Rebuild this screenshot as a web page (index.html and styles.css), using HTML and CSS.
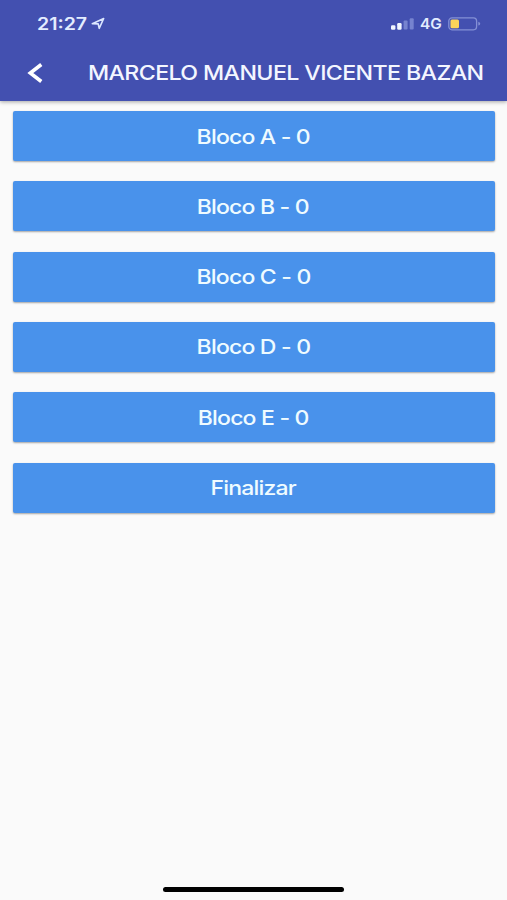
FILE: index.html
```html
<!DOCTYPE html>
<html lang="pt">
<head>
<meta charset="utf-8">
<title>Blocos</title>
<link rel="stylesheet" href="styles.css">
</head>
<body>
<div class="screen">
  <header class="header">
    <div class="status">
      <span class="time">21:27</span>
      <svg class="location" width="14" height="14" viewBox="0 0 14 14"><path d="M1.3 6.8 12.7 1.5 8.2 11.3 7.2 6.9Z"/></svg>
      <svg class="signal" width="23" height="12" viewBox="0 0 23 12"><rect x="0" y="7.3" width="4.4" height="4.4" rx="1.2"/><rect x="6.2" y="5" width="4.4" height="6.7" rx="1.2"/><rect class="dim" x="12.6" y="2.6" width="4" height="8.9" rx="1"/><rect class="dim" x="18.7" y="0.2" width="4" height="11.3" rx="1"/></svg>
      <span class="network">4G</span>
      <svg class="battery" width="33" height="14" viewBox="0 0 33 14"><rect class="case" x="0.8" y="0.9" width="27.8" height="11.9" rx="3.2"/><rect class="charge" x="2.5" y="2.4" width="8.5" height="8.8" rx="1.5"/><path class="tip" d="M30.3 4.8Q32.2 5.4 32.2 6.7T30.3 8.6Z"/></svg>
    </div>
    <div class="toolbar">
      <svg class="back" width="16" height="20" viewBox="0 0 16 20"><path d="M14.3 1.5 3.3 10 14.3 18.5"/></svg>
      <h1 class="title">MARCELO MANUEL VICENTE BAZAN</h1>
    </div>
  </header>
  <main class="list">
    <button class="block"><span>Bloco A - 0</span></button>
    <button class="block"><span>Bloco B - 0</span></button>
    <button class="block"><span>Bloco C - 0</span></button>
    <button class="block"><span>Bloco D - 0</span></button>
    <button class="block"><span>Bloco E - 0</span></button>
    <button class="block"><span>Finalizar</span></button>
  </main>
  <div class="home"></div>
</div>
</body>
</html>
```

FILE: styles.css
```css
* { box-sizing: border-box; }
body { margin: 0; font-family: Inter, "Liberation Sans", sans-serif; background: #fafafa; }
.screen { width: 507px; height: 900px; display: flex; flex-direction: column; overflow: hidden; background: #fafafa; }
.header { height: 101px; flex: none; background: #4350b0; color: #f3f6ff; box-shadow: 0 1px 4px rgba(0,0,0,.35); }
.status { height: 46px; display: flex; align-items: center; padding: 1px 26px 0 37px; }
.time { width: 54px; font-size: 17px; font-weight: 600; color: #e3edff; white-space: nowrap; transform: scaleX(1.15); transform-origin: left; }
.location { fill: none; stroke: #dce7ff; stroke-width: 1.6; stroke-linejoin: round; }
.signal { margin-left: auto; margin-right: -1px; fill: #f1f6ff; }
.signal .dim { fill: #7683cf; }
.network { width: 28px; margin-left: 7px; font-size: 14px; font-weight: 600; color: #e3edff; transform: scaleX(1.1); transform-origin: left; }
.battery { fill: none; }
.case { stroke: #8490d5; stroke-width: 1.3; }
.charge { fill: #fbd45a; }
.tip { fill: #8490d5; }
.toolbar { height: 54px; display: flex; align-items: center; padding-left: 27px; }
.back { flex: none; fill: none; stroke: #fff; stroke-width: 3.6; }
.title { margin: 0 0 0 45px; font-size: 20px; font-weight: 500; line-height: 24px; letter-spacing: -.54px; white-space: nowrap; transform: scaleX(1.16); transform-origin: left; }
.list { flex: 1; display: flex; flex-direction: column; gap: 20.3px; padding: 10.1px 12px 0 13px; }
.block { height: 50px; flex: none; border: 0; border-radius: 2px; padding: 1px 2px 0 0; background: #4992eb; color: #effbff; font: 500 20px/24px Inter, "Liberation Sans", sans-serif; letter-spacing: -.7px; box-shadow: 0 1px 2px rgba(0,0,0,.35); }
.block span { display: inline-block; transform: scaleX(1.15); }
.home { width: 181px; height: 5px; flex: none; margin: 0 0 8px 163px; border-radius: 3px; background: #000; }
```
